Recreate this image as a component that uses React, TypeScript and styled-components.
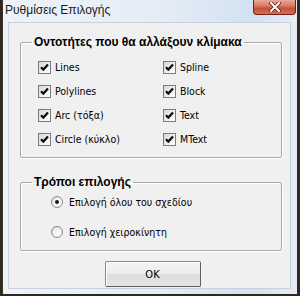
import React, {useState} from 'react';
import styled, {createGlobalStyle} from 'styled-components';

const GlobalStyle = createGlobalStyle`
  html, body {
    margin: 0;
    padding: 0;
    background: #2e2821;
  }
  body {
    font-family: "Liberation Sans", Arial, sans-serif;
  }
`

const Screen = styled.div`
  width: 300px;
  height: 296px;
  background: #2e2821;
  overflow: hidden;
`

const Window = styled.div`
  margin-left: 2px;
  width: 294px;
  height: 294px;
  border-left: 1px solid #3a332b;
  background: linear-gradient(90deg, #eef3f9 0%, #e4ecf6 55%, #d3e1f1 85%, #e6edf6 100%);
  display: flex;
  flex-direction: column;
`

const TitleBar = styled.div`
  height: 22px;
  display: flex;
  align-items: center;
  justify-content: space-between;
  padding-left: 2px;
`

const Title = styled.div`
  font-size: 12px;
  color: #1a1a1a;
  padding-bottom: 2px;
`

const CloseButton = styled.div`
  align-self: flex-start;
  width: 43px;
  height: 15px;
  margin-right: 1px;
  box-sizing: border-box;
  border: 1px solid #6d2117;
  border-top: none;
  border-radius: 0 0 4px 4px;
  background: linear-gradient(180deg, #eaa898 0%, #d87c6a 40%, #c64f38 60%, #d5704f 100%);
  display: flex;
  align-items: center;
  justify-content: center;
`

const Client = styled.div`
  margin: 0 6px 5px 5px;
  flex: 1;
  background: #f0f0f0;
  border: 1px solid #c9d2dc;
  box-sizing: border-box;
  display: flex;
  flex-direction: column;
  padding: 12px 8px 0 11px;
`

const Group = styled.fieldset<{ $gap?: number }>`
  margin: 0;
  padding: 0;
  border: 1px solid #a9a9a9;
  border-radius: 2px;
  box-shadow: inset 1px 1px 0 #ffffff, 1px 1px 0 #ffffff;
  margin-top: ${p => p.$gap || 0}px;
`

const Legend = styled.legend`
  margin-left: 11px;
  padding: 0 2px;
  font-size: 12px;
  font-weight: bold;
  color: #000;
  line-height: 14px;
`

const CheckGrid = styled.div`
  display: grid;
  grid-template-columns: 125px 1fr;
  grid-auto-rows: 24px;
  padding: 6px 0 6px 17px;
`

const OptionRow = styled.label<{ $gap?: number }>`
  display: flex;
  align-items: center;
  gap: ${p => p.$gap || 4}px;
  font-family: "DejaVu Sans Condensed", "DejaVu Sans", sans-serif;
  font-size: 10.5px;
  color: #000;
`

const Box = styled.span`
  width: 13px;
  height: 13px;
  box-sizing: border-box;
  border: 1px solid #7c7c7c;
  background: linear-gradient(135deg, #d6d6d6 0%, #f2f2f2 60%, #ffffff 100%);
  display: flex;
  align-items: center;
  justify-content: center;
`

const RadioList = styled.div`
  display: flex;
  flex-direction: column;
  gap: 4px;
  padding: 0 0 5px 30px;
`

const RadioRow = styled(OptionRow)`
  height: 26px;
`

const RadioCircle = styled.span<{ $on: boolean }>`
  width: 12px;
  height: 12px;
  box-sizing: border-box;
  border-radius: 50%;
  border: 1px solid #8a8a8a;
  background: radial-gradient(circle at 65% 65%, #ffffff 0%, #f2f2f2 50%, #cfcfcf 100%);
  display: flex;
  align-items: center;
  justify-content: center;
  &::after {
    content: '';
    width: 4px;
    height: 4px;
    border-radius: 50%;
    background: ${p => (p.$on ? '#1b1b1b' : 'transparent')};
  }
`

const Footer = styled.div`
  display: flex;
  justify-content: center;
  padding-top: 10px;
  padding-left: 3px;
`

const OkButton = styled.button`
  width: 96px;
  height: 26px;
  font-family: "DejaVu Sans Condensed", "DejaVu Sans", sans-serif;
  font-size: 11px;
  color: #000;
  border: 1px solid #8a8a8a;
  border-right-color: #5f5f5f;
  border-bottom-color: #5f5f5f;
  border-radius: 2px;
  background: linear-gradient(180deg, #f4f4f4 0%, #ececec 50%, #dedede 51%, #e3e3e3 100%);
  box-shadow: inset 1px 1px 0 #ffffff;
  padding: 0;
`

const Check = () => (
    <svg width="9" height="9" viewBox="0 0 9 9">
        <path d="M1 4.2 L3.3 6.6 L8 1.4" fill="none" stroke="#0d0d0d" strokeWidth="2.2"/>
    </svg>
)

const entities = [
    'Lines', 'Spline',
    'Polylines', 'Block',
    'Arc (τόξα)', 'Text',
    'Circle (κύκλο)', 'MText',
]

const App = () => {
    const [mode, setMode] = useState(0)

    return (<>
            <GlobalStyle/>
            <Screen>
                <Window>
                    <TitleBar>
                        <Title>Ρυθμίσεις Επιλογής</Title>
                        <CloseButton>
                            <svg width="12" height="10" viewBox="0 0 12 10">
                                <path d="M2 1 L10 9 M10 1 L2 9" stroke="#5a1a10" strokeWidth="3.4" strokeLinecap="square"/>
                                <path d="M2 1 L10 9 M10 1 L2 9" stroke="#ffffff" strokeWidth="2" strokeLinecap="square"/>
                            </svg>
                        </CloseButton>
                    </TitleBar>
                    <Client>
                        <Group>
                            <Legend>Οντοτήτες που θα αλλάξουν κλίμακα</Legend>
                            <CheckGrid>
                                {entities.map(name => (
                                    <OptionRow key={name}>
                                        <Box><Check/></Box>
                                        {name}
                                    </OptionRow>
                                ))}
                            </CheckGrid>
                        </Group>
                        <Group $gap={17}>
                            <Legend>Τρόποι επιλογής</Legend>
                            <RadioList>
                                {['Επιλογή όλου του σχεδίου', 'Επιλογή χειροκίνητη'].map((text, i) => (
                                    <RadioRow key={text} $gap={6} onClick={() => setMode(i)}>
                                        <RadioCircle $on={mode === i}/>
                                        {text}
                                    </RadioRow>
                                ))}
                            </RadioList>
                        </Group>
                        <Footer>
                            <OkButton>OK</OkButton>
                        </Footer>
                    </Client>
                </Window>
            </Screen>
        </>
    );
};

export default App;
